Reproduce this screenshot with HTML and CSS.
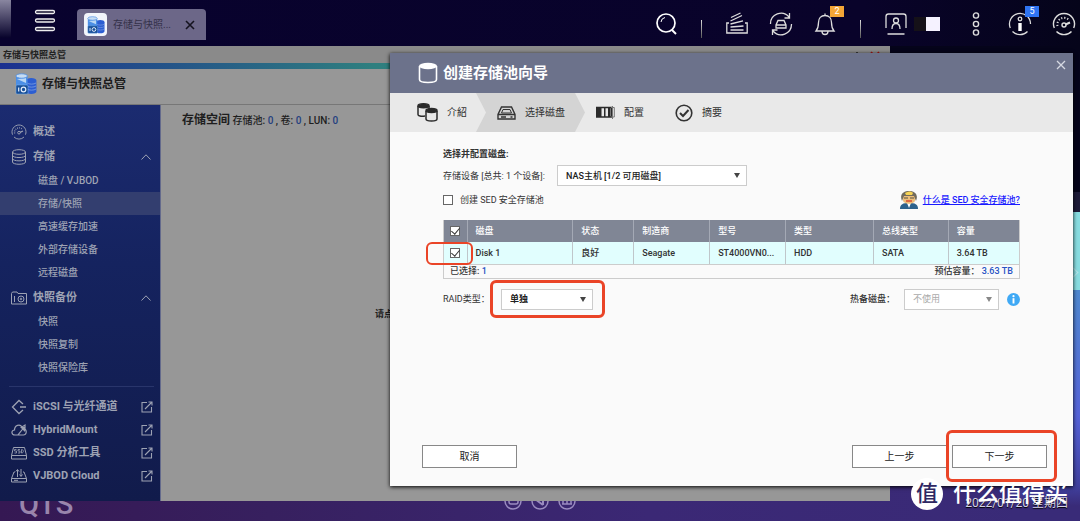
FILE: index.html
```html
<!DOCTYPE html>
<html lang="zh-CN">
<head>
<meta charset="utf-8">
<title>存储与快照总管</title>
<link rel="stylesheet" href="styles.css">
</head>
<body>
<svg class="defs" width="0" height="0" aria-hidden="true">
  <symbol id="logo" viewBox="0 0 22 22">
    <path d="M11 7.500c0-1.600 2.200-2.500 5.200-2.500s5.200.9 5.200 2.500v11c0 1.600-2.200 2.500-5.200 2.500S11 20.100 11 18.500z" fill="#2c5ed2"/>
    <path d="M12 10c2 1.500 7 1.500 9 0M12 13c2 1.500 7 1.500 9 0M12 16c2 1.500 7 1.500 9 0" fill="none" stroke="#7e9fe0" stroke-width=".8"/>
    <path d="M1 3v9c2 2 9.500 2 11.500 0V3z" fill="#4c8fe6"/>
    <path d="M2 6l9 4V5z" fill="#b9d6f4"/>
    <ellipse cx="6.700" cy="3" rx="5.800" ry="2.200" fill="#c7dcf2" stroke="#4c8fe6" stroke-width=".8"/>
    <rect x="1" y="12" width="12" height="9" rx="1" fill="#184f98" stroke="#7db4ef" stroke-width=".5"/>
    <path d="M3.700 14.500v4" stroke="#e4eefb" stroke-width="1.200"/>
    <circle cx="8.500" cy="16.500" r="2.300" fill="none" stroke="#e4eefb" stroke-width="1.200"/>
  </symbol>
  <symbol id="gauge" viewBox="0 0 24 24">
    <g fill="none" stroke="currentColor" stroke-width="1.400">
      <path d="M2.300 16A10.500 10.500 0 1 1 21.700 16M4.500 19.500a10.500 10.500 0 0 0 15 0"/>
      <path d="M5.500 14a6.700 6.700 0 0 1 11-6.500" stroke-width="2" stroke-dasharray="1.200 1.800"/>
      <circle cx="12" cy="13" r="2"/><path d="M13.500 12.500L18 10.500" stroke-width="2"/>
    </g>
  </symbol>
  <symbol id="up" viewBox="0 0 10 6"><path d="M.5 5.500L5 .8l4.500 4.700" fill="none" stroke="currentColor"/></symbol>
  <symbol id="ext" viewBox="0 0 12 12"><path d="M6 1.500H1v9.500h9.500V6M4 8l6.500-6.500M7.500 1H11v3.500" fill="none" stroke="currentColor" stroke-width="1.100"/></symbol>
</svg>

<div class="desktop">
  <header class="taskbar">
    <button class="icon-btn menu" aria-label="菜单">
      <svg width="22" height="24" viewBox="0 0 22 24" fill="#15102f" stroke="#eee" stroke-width="1.300"><rect x="1.500" y="1.500" width="19" height="3" rx="1.500"/><rect x="1.500" y="10" width="19" height="3" rx="1.500"/><rect x="1.500" y="18.500" width="19" height="3" rx="1.500"/></svg>
    </button>
    <div class="tab">
      <span class="tab-icon"><svg width="18" height="18"><use href="#logo"/></svg></span>
      <span class="tab-name">存储与快照...</span>
      <button class="icon-btn" aria-label="关闭标签"><svg width="10" height="10" viewBox="0 0 10 10"><path d="M1 1l8 8M9 1L1 9" stroke="#15131f" stroke-width="1.600"/></svg></button>
    </div>
    <nav class="tray">
      <button class="icon-btn" aria-label="搜索"><svg width="24" height="24" viewBox="0 0 24 24" fill="none" stroke="#fff"><circle cx="12" cy="11" r="9" stroke-width="1.700"/><path d="M18 18l4 4" stroke-width="2"/><path d="M7 10a5 5 0 0 1 4-4.500"/></svg></button>
      <i class="sep"></i>
      <button class="icon-btn" aria-label="后台任务"><svg width="24" height="24" viewBox="0 0 24 24" fill="none" stroke="#ddd" stroke-width="1.300"><path d="M4 11H1.800v10h20.400V11H20M5.500 18h13M5.500 15l13-1M5.500 12l12.500-3.200M5.500 9l11.500-5.500M6 5.500L15.500 1"/></svg></button>
      <button class="icon-btn" aria-label="外部设备"><svg width="24" height="24" viewBox="0 0 24 24" fill="none" stroke="#ddd" stroke-width="1.300"><path d="M1.500 12A10.500 10.500 0 0 1 20 5M22.500 12A10.500 10.500 0 0 1 4 19M20.500 1v5h-5M3.500 23v-5h5"/><path d="M9 8.500h6l2 4.500v3H7v-3zM7 13h10"/></svg></button>
      <button class="icon-btn" aria-label="通知"><svg width="24" height="24" viewBox="0 0 24 24" fill="none" stroke="#ddd" stroke-width="1.300"><path d="M12 1.500v2M3 19c2.500-3 2.500-5 2.500-8.500 0-4 2.500-7 6.500-7s6.500 3 6.500 7c0 3.500 0 5.500 2.500 8.500zM9 19.500a3 3 0 0 0 6 0"/></svg><span class="badge orange">2</span></button>
      <i class="sep"></i>
      <button class="icon-btn user" aria-label="用户"><svg width="24" height="24" viewBox="0 0 24 24" fill="none" stroke="#ddd" stroke-width="1.300"><path d="M2 16V4.500a2.500 2.500 0 0 1 2.500-2.500h15a2.500 2.500 0 0 1 2.500 2.500V16M3.500 22h17M8 17c0-3 1-5.500 4-5.500s4 2.500 4 5.500"/><circle cx="12" cy="8.500" r="2.500"/></svg><span class="mask"></span></button>
      <button class="icon-btn" aria-label="更多"><svg width="24" height="24" viewBox="0 0 24 24" fill="none" stroke="#ddd" stroke-width="1.400"><circle cx="12" cy="3.500" r="2.600"/><circle cx="12" cy="12" r="2.600"/><circle cx="12" cy="20.500" r="2.600"/></svg></button>
      <button class="icon-btn" aria-label="信息"><svg width="24" height="24" viewBox="0 0 24 24" fill="none" stroke="#ddd" stroke-width="1.300"><path d="M2.300 16A10.500 10.500 0 1 1 22.500 12M4.500 19.500a10.500 10.500 0 0 0 15 0"/><circle cx="12" cy="7" r="1.800"/><path d="M12 11v8" stroke="#fff" stroke-width="3.400"/></svg><span class="badge blue">5</span></button>
      <button class="icon-btn" aria-label="资源监控"><svg width="24" height="24"><use href="#gauge"/></svg></button>
    </nav>
  </header>

  <aside class="widget"><span class="widget-arrow"></span></aside>
  <div class="brand">QTS</div>
  <div class="dock">
    <svg width="18" height="18" viewBox="0 0 18 18" fill="none" stroke="#9a8bc0" stroke-width="1.500"><circle cx="9" cy="9" r="8"/><rect x="5" y="6" width="9" height="6" rx="2"/></svg>
    <svg width="18" height="18" viewBox="0 0 18 18" fill="none" stroke="#9a8bc0" stroke-width="1.500"><circle cx="9" cy="9" r="8"/><path d="M4 7l8 6M12 5v8" stroke-width="2"/></svg>
    <svg width="18" height="18" viewBox="0 0 18 18" fill="none" stroke="#9a8bc0" stroke-width="1.500"><circle cx="9" cy="9" r="8"/><path d="M5 12V6M9 12V5M13 12V6M4 12h10"/></svg>
  </div>
  <time class="date">2022/01/20 星期四</time>

  <section class="window">
    <div class="window-title"><span>存储与快照总管</span>
      <svg width="30" height="8" viewBox="0 0 30 8"><path d="M5 2v6" stroke="#222" stroke-width="1.500"/><path d="M19 2l7 7M27 2l-7 7" stroke="#a11" stroke-width="1.600"/></svg></div>
    <div class="window-head"><svg width="22" height="22"><use href="#logo"/></svg><h1>存储与快照总管</h1></div>
    <div class="window-body">
      <nav class="sidebar">
        <a class="main" href="#"><svg width="16" height="16"><use href="#gauge"/></svg><span>概述</span></a>
        <a class="main" href="#"><svg width="16" height="16" viewBox="0 0 16 16" fill="none" stroke="currentColor"><ellipse cx="8" cy="3" rx="6.500" ry="2.300"/><path d="M1.500 3v10c0 3 13 3 13 0V3M1.500 6.300c0 3 13 3 13 0M1.500 9.600c0 3 13 3 13 0"/></svg><span>存储</span><svg class="end" width="10" height="6"><use href="#up"/></svg></a>
        <ul>
          <li><a href="#">磁盘 / VJBOD</a></li>
          <li class="on"><a href="#">存储/快照</a></li>
          <li><a href="#">高速缓存加速</a></li>
          <li><a href="#">外部存储设备</a></li>
          <li><a href="#">远程磁盘</a></li>
        </ul>
        <a class="main" href="#"><svg width="16" height="16" viewBox="0 0 16 16" fill="none" stroke="currentColor"><path d="M.5 3.500l1-1.500H6l1 1.500h8.500V14H.5zM3.500 6v6"/><circle cx="10" cy="9" r="3"/><circle cx="10" cy="9" r=".8"/></svg><span>快照备份</span><svg class="end" width="10" height="6"><use href="#up"/></svg></a>
        <ul>
          <li><a href="#">快照</a></li>
          <li><a href="#">快照复制</a></li>
          <li><a href="#">快照保险库</a></li>
        </ul>
        <hr>
        <a class="main link" href="#"><svg width="16" height="16" viewBox="0 0 16 16" fill="none" stroke="currentColor" stroke-width="1.300"><path d="M12 5L8 1.500 1.500 8 8 14.500 12 11M9 8h6"/></svg><span>iSCSI 与光纤通道</span><svg class="end" width="12" height="12"><use href="#ext"/></svg></a>
        <a class="main link" href="#"><svg width="16" height="16" viewBox="0 0 16 16" fill="none" stroke="currentColor" stroke-width="1.200"><path d="M7 13H4C0 13 0 8 3.500 8 3.500 3 9 1.500 11 5l3-2v4c2 2 1.500 6-1.500 6H7l5.500-7"/><path d="M9 5h5v5z" fill="currentColor" stroke="none"/></svg><span>HybridMount</span><svg class="end" width="12" height="12"><use href="#ext"/></svg></a>
        <a class="main link" href="#"><svg width="16" height="16" viewBox="0 0 16 16" fill="none" stroke="currentColor"><path d="M2.500 2.500h11l2 8v3.500H.5v-3.500zM.5 10.500h15"/><path d="M5.500 4.500H3.500v1.500h2v2h-2M9 4.500H7v1.500h2v2H7M10.500 4.500v3.500c2.500 0 2.500-3.500 0-3.500" stroke-width=".8"/></svg><span>SSD 分析工具</span><svg class="end" width="12" height="12"><use href="#ext"/></svg></a>
        <a class="main link" href="#"><svg width="16" height="16" viewBox="0 0 16 16" fill="none" stroke="currentColor"><path d="M4 4H3L.5 10.500V14h15v-3.500L13 4h-1M.5 10.500h15M6.500 9V2M4.800 3.500L6.500 1.500 8 3.500M10 1v7M8.500 6.500L10 8.500l1.500-2M3 12.300h4"/></svg><span>VJBOD Cloud</span><svg class="end" width="12" height="12"><use href="#ext"/></svg></a>
      </nav>
      <main class="content">
        <p class="counts"><strong>存储空间</strong> 存储池: <b>0</b> , 卷: <b>0</b> , LUN: <b>0</b></p>
        <p class="hint">请点</p>
      </main>
    </div>
  </section>

  <section class="dialog" role="dialog" aria-labelledby="dlg-title">
    <header class="dialog-head">
      <svg width="20" height="22" viewBox="0 0 20 22"><path d="M1.500 4v13.500c0 4 17 4 17 0V4" fill="none" stroke="#fff" stroke-width="1.600"/><ellipse cx="10" cy="4" rx="9" ry="3.300" fill="#fff"/></svg>
      <h2 id="dlg-title">创建存储池向导</h2>
      <button class="icon-btn close" aria-label="关闭"><svg width="10" height="10" viewBox="0 0 10 10"><path d="M1 1l8 8M9 1L1 9" stroke="#d6d9e2" stroke-width="1.300"/></svg></button>
    </header>
    <ol class="steps">
      <li><svg width="21" height="19" viewBox="0 0 21 19" fill="none" stroke="#2b2b2b" stroke-width="1.500"><path d="M1 3v8.500c0 1.500 3 2 7 1.500M12 3v2.500"/><ellipse cx="6.500" cy="2.800" rx="5.500" ry="2" fill="#2b2b2b"/><path d="M9 8v8c0 2.700 11 2.700 11 0V8"/><ellipse cx="14.500" cy="7.500" rx="5.500" ry="2" fill="#2b2b2b"/></svg>介紹</li>
      <li class="current"><svg width="19" height="14" viewBox="0 0 19 14" fill="none" stroke="#333" stroke-width="1.400"><path d="M4.500 1h10L18 8.500V13H1V8.500zM1 8.500h17"/><path d="M6 3.500h7l1.500 3.500h-10z" stroke-width="1"/><path d="M4 11h5M13.500 11h2"/></svg>选择磁盘</li>
      <li><svg width="19" height="13" viewBox="0 0 19 13" fill="none" stroke="#2b2b2b"><path d="M.5 1.500h15v9.500H.5z" stroke-width="1.400"/><path d="M1 2h4.500v9H1zM8 2h1.500v9H8zM12 2h2.500v9H12z" fill="#2b2b2b" stroke="none"/><path d="M16.500 0v13M15 1.500h3.300v9.500H15" stroke="#777"/></svg>配置</li>
      <li><svg width="18" height="18" viewBox="0 0 18 18" fill="none" stroke="#333"><circle cx="9" cy="9" r="7.800" stroke-width="1.600"/><path d="M5 9l3 3 5.500-6" stroke-width="2"/></svg>摘要</li>
    </ol>
    <form class="dialog-body">
      <h3>选择并配置磁盘:</h3>
      <div class="row device">
        <label for="device">存储设备 [总共: 1 个设备]:</label>
        <span class="select wide"><select id="device"><option>NAS主机 [1/2 可用磁盘]</option></select></span>
      </div>
      <div class="row sed">
        <input type="checkbox" id="sed"><label for="sed">创建 SED 安全存储池</label>
        <span class="help">
          <svg width="18" height="18" viewBox="0 0 18 18"><path d="M0 18c0-5 3-6 9-6s9 1 9 6z" fill="#2d628c"/><path d="M7 12h4l-2 5z" fill="#fff"/><path d="M3 4h12v5c0 5-12 5-12 0z" fill="#edbd79"/><path d="M2 10C-1 3 4 0 9 0s10 3 7 10l-2-5H4z" fill="#716b5c"/><path d="M5 2c3-2 6-2 8 0l-1 2H6z" fill="#f6d354"/><path d="M4 7h4M10 7h4" stroke="#555544" stroke-width="1.200"/><path d="M6 10h6" stroke="#d84d31" stroke-width="1.500"/></svg>
          <a href="#">什么是 SED 安全存储池?</a>
        </span>
      </div>
      <div class="grid-wrap">
        <table>
          <colgroup><col class="c-check"><col class="c-disk"><col class="c-state"><col class="c-maker"><col class="c-model"><col class="c-type"><col class="c-bus"><col class="c-size"></colgroup>
          <thead><tr><th><input type="checkbox" checked aria-label="全选"></th><th>磁盘</th><th>状态</th><th>制造商</th><th>型号</th><th>类型</th><th>总线类型</th><th>容量</th></tr></thead>
          <tbody><tr><td><input type="checkbox" checked aria-label="Disk 1"></td><td>Disk 1</td><td>良好</td><td>Seagate</td><td>ST4000VN0...</td><td>HDD</td><td>SATA</td><td>3.64 TB</td></tr></tbody>
        </table>
        <div class="summary"><span>已选择: <b>1</b></span><span>预估容量：&nbsp;<b>3.63 TB</b></span></div>
        <i class="mark mark-check"></i>
      </div>
      <div class="row raid">
        <label for="raid">RAID类型：</label>
        <span class="select small"><select id="raid"><option>单独</option></select><i class="mark mark-raid"></i></span>
        <label class="spare-label" for="spare">热备磁盘：</label>
        <span class="select small off"><select id="spare" disabled><option>不使用</option></select></span>
        <svg class="info" width="13" height="13" viewBox="0 0 13 13"><circle cx="6.500" cy="6.500" r="6.500" fill="#3fa9f5"/><circle cx="6.500" cy="3.200" r="1.100" fill="#fff"/><path d="M6.500 5.200v5.300" stroke="#fff" stroke-width="1.900"/></svg>
      </div>
    </form>
    <footer class="dialog-foot">
      <button>取消</button>
      <button class="prev">上一步</button>
      <span class="next"><button>下一步</button><i class="mark mark-next"></i></span>
    </footer>
  </section>

  <div class="watermark"><span class="seal">值</span><span>什么值得买</span></div>
</div>
</body>
</html>
```
FILE: styles.css
```css
* { box-sizing: border-box; }
body, h1, h2, h3, p, ul, ol { margin: 0; padding: 0; }
body { font: 9px/14px Roboto, "Noto Sans CJK SC", sans-serif; color: #333; }
button, select, input { font: inherit; color: inherit; margin: 0; }
ul, ol { list-style: none; }
a { color: inherit; text-decoration: none; }
svg { display: block; flex: none; }
.defs { position: absolute; }
.desktop {
  position: relative; min-height: 100vh; overflow: hidden;
  background: linear-gradient(#05041a, #05041a) 0 0 / 100% 192px no-repeat, linear-gradient(90deg, #351853 0, #37205f 25%, #3b2875 60%, #392b78 100%);
}
.icon-btn { display: flex; align-items: center; position: relative; border: 0; padding: 0; background: none; }

/* Task bar */
.taskbar {
  display: flex; align-items: flex-start; height: 46px; padding: 9px 4px 0 34px;
  background: linear-gradient(180deg, #8986a0, #07022b) 0 0 / 11px 38px no-repeat, linear-gradient(90deg, #08022e, #09032a 80%, #05041a);
}
.tab {
  display: flex; align-items: center; width: 129px; height: 31px; margin-left: 21px; padding: 0 11px 0 7px;
  border-radius: 4px 4px 0 0; background: #6c6788; color: #34314a; font-size: 10px;
}
.tab-icon { display: grid; place-items: center; width: 23px; height: 23px; border-radius: 4px; background: #f2f5fb; }
.tab-name { flex: 1; margin-left: 6px; white-space: nowrap; }
.tray { display: flex; gap: 20px; margin-left: auto; color: #ddd; }
.sep { width: 1px; height: 18px; margin: 11px 3px 0; background: linear-gradient(#ddd, #555); }
.badge { position: absolute; top: -3px; left: 17px; width: 14px; height: 11px; font-size: 9px; line-height: 11px; text-align: center; color: #fff; }
.orange { background: #f3a536; }
.blue { background: #2f74f2; }
.user { gap: 6px; padding-right: 4px; }
.mask { width: 26px; height: 14px; background: linear-gradient(90deg, #151118 12px, #f5f2ff 12px); }

/* Desktop pieces behind the windows */
.widget {
  position: absolute; right: 0; top: 46px; bottom: 0; width: 70px;
  background: linear-gradient(#05041a 0 146px, #1e1b38 146px 166px, #87dce0 166px 244px, #4f88cf 244px, #5563d8 370px, #40409e 440px, #392b78 460px);
}
.widget-arrow { position: absolute; right: 3px; top: 223px; width: 7px; height: 7px; border: solid #b4e6ea; border-width: 1px 1px 0 0; transform: rotate(45deg); }
.brand { position: absolute; left: 19px; bottom: 1px; font-size: 29px; line-height: 32px; font-weight: 500; color: #9985ac; }
.dock { position: absolute; left: 504px; bottom: 11px; display: flex; gap: 9px; }
.date { position: absolute; right: 12px; bottom: 10px; font-size: 12px; line-height: 16px; color: #d5d2e2; text-shadow: 0 1px 1px #000; }

/* Manager window */
.window { position: absolute; left: 0; right: 190px; top: 46px; bottom: 20px; display: flex; flex-direction: column; background: #979797; }
.window-title {
  display: flex; justify-content: space-between; height: 23px; padding: 2px 8px 0 3px;
  border-bottom: 6px solid; border-image: linear-gradient(90deg, #1b3090, #2f7f7f 42%, #3b8a78) 1;
  background: #8a8a8a; font-weight: 700; color: #222; line-height: 14px;
}
.window-title svg { margin-top: 2px; }
.window-head { display: flex; align-items: center; gap: 5px; height: 36px; padding: 0 15px 5px; border-bottom: 1px solid #777; }
h1 { font-size: 12px; font-weight: 700; color: #1c1c1c; }
.window-body { display: flex; flex: 1; min-height: 0; }
.sidebar { flex: none; width: 161px; padding-top: 14px; border-right: 1px solid #646a8c; background: linear-gradient(#1b2b70, #15235f 40%, #111b4b); color: #9da2b3; }
.main { display: flex; align-items: center; height: 25px; padding: 0 9px 0 11px; font-size: 11px; font-weight: 700; }
.main span { margin-left: 6px; white-space: nowrap; }
.end { margin-left: auto; }
.link { height: 23px; padding-right: 7px; }
.sidebar ul { padding-bottom: 1px; font-size: 10px; font-weight: 500; }
.sidebar li { height: 23px; padding-left: 38px; line-height: 23px; }
.sidebar .on { background: #333e6f; }
.sidebar hr { margin: 6px 6px 8px 9px; border: 0; border-top: 1px solid #29356b; }
.content { flex: 1; padding: 7px 21px; color: #1e1e1e; }
.counts { font-size: 10px; line-height: 16px; font-weight: 500; }
.counts strong { font-size: 12px; }
.counts b { font-weight: 500; color: #24407f; }
.hint { margin: 178px 0 0 193px; font-weight: 700; }

/* Wizard dialog */
.dialog {
  position: absolute; left: 390px; right: 7px; top: 53px; bottom: 35px; display: flex; flex-direction: column;
  background: #fafafa; box-shadow: 0 1px 4px #000;
}
.dialog-head { display: flex; align-items: center; gap: 5px; height: 40px; padding: 0 7px 0 28px; background: #6c728b; color: #fff; }
h2 { font-size: 15px; line-height: 20px; font-weight: 700; }
.close { align-self: flex-start; margin-left: auto; margin-top: 7px; }
.steps { display: flex; height: 39px; background: #e9e9e9; font-size: 10px; }
.steps li { display: flex; align-items: center; gap: 9px; width: 89px; padding-left: 11px; }
.steps li:nth-child(4) { padding-left: 1px; }
.steps li:first-child { width: 86px; padding-left: 27px; }
.steps .current { width: 109px; padding-left: 21px; background: #d4d4d4; clip-path: polygon(0 0, 99px 0, 100% 50%, 99px 100%, 0 100%, 10px 50%); }
.dialog-body { flex: 1; padding: 15px 53px 0; font-weight: 500; }
h3 { font-size: 9px; line-height: 14px; font-weight: 700; }
.row { display: flex; align-items: center; }
.row label { white-space: nowrap; font-weight: 400; }
.row .spare-label { font-weight: 500; }
.device { margin-top: 4px; }
.device label { width: 114px; }
.select { position: relative; display: block; height: 21px; }
.select::after { content: ""; position: absolute; right: 7px; top: 8px; border: 3px solid transparent; border-top: 5px solid #444; border-bottom: 0; }
.select select { appearance: none; display: block; width: 100%; height: 100%; padding: 0 8px; border: 1px solid #ccc; border-radius: 0; background: #fff; color: #222; font-weight: 700; }
.wide { width: 190px; }
.wide select { font-weight: 500; }
.small { width: 92px; }
.off { width: 95px; }
.off::after { border-top-color: #888; }
.off select { color: #aaa; opacity: 1; font-weight: 400; }
input[type="checkbox"] { appearance: none; display: block; position: relative; width: 10px; height: 10px; border: 1px solid #666; background: #fff; }
input:checked::after { content: ""; position: absolute; left: 2px; top: -1px; width: 4px; height: 7px; border: solid #333; border-width: 0 1px 1px 0; transform: rotate(40deg); }
.sed { margin-top: 3px; height: 22px; gap: 7px; }
.help { display: flex; align-items: center; gap: 5px; margin-left: auto; }
.help a { color: #1a1aff; text-decoration: underline; }
.grid-wrap { position: relative; margin-top: 9px; border: 1px solid #ccc; border-top: 0; }
table { width: 100%; table-layout: fixed; border-collapse: collapse; }
.c-check { width: 4%; }
.c-disk { width: 18.4%; }
.c-state { width: 10.6%; }
.c-maker, .c-model { width: 13.2%; }
.c-type { width: 15.3%; }
.c-bus { width: 13%; }
th, td { height: 22px; padding: 0 8px; text-align: left; font-weight: 500; white-space: nowrap; border-right: 1px solid #bfc6ca; }
th { background: #808695; color: #fff; border-color: #a4a9b5; }
td { background: #e1fefe; border-bottom: 1px solid #ccc; }
th:first-child, td:first-child { padding: 0 6px; }
th:last-child, td:last-child { border-right: 0; }
.summary { display: flex; justify-content: space-between; height: 13px; padding: 0 6px; line-height: 13px; }
.summary b { font-weight: 500; color: #2653c5; }
.raid { margin-top: 10px; }
.raid label:first-child { width: 58px; }
.spare-label { margin-left: auto; width: 54px; }
.info { margin-left: 8px; }
.dialog-foot { display: flex; padding: 0 26px 18px 32px; font-size: 10px; }
.dialog-foot button { display: block; width: 95px; height: 23px; padding: 0; border: 1px solid #888; background: #fff; color: #222; }
.prev { margin-left: auto; }
.next { position: relative; margin-left: 5px; }

/* Highlight frames */
.mark { position: absolute; border: 3px solid #ea4427; border-radius: 6px; pointer-events: none; z-index: 1; }
.mark-check { left: -18px; top: 22px; width: 47px; height: 23px; border-width: 2px; }
.mark-raid { left: -11px; top: -9px; width: 115px; height: 38px; }
.mark-next { inset: -15px -10px -14px -6px; }

.watermark { position: absolute; right: 12px; bottom: 11px; display: flex; align-items: center; gap: 10px; font-size: 23px; line-height: 32px; font-weight: 500; color: #fff; white-space: nowrap; }
.seal { width: 32px; height: 32px; border-radius: 50%; background: #fff; color: #2e2863; text-align: center; font-size: 22px; }
```
